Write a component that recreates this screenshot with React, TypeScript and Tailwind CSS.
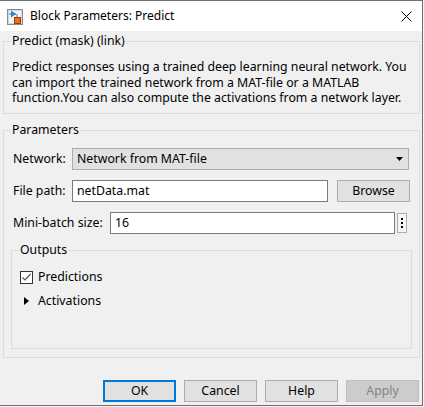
import { useState } from 'react';

const font = { fontFamily: '"Noto Sans", "Liberation Sans", sans-serif' };

function BlockIcon() {
  return (
    <svg width="16" height="16" viewBox="0 0 16 16">
      <rect x="0.5" y="0.5" width="15" height="15" fill="#f4f4f4" stroke="#8a8a8a" />
      <rect x="1.5" y="1.5" width="13" height="13" fill="none" stroke="#d8d8d8" />
      <line x1="2" y1="5" x2="9" y2="5" stroke="#1f6fc4" strokeWidth="1" />
      <polygon points="4,1.5 9,5 4,8.5" fill="#2a86db" />
      <line x1="10" y1="5" x2="10" y2="9" stroke="#6a6a6a" />
      <rect x="7.5" y="8.5" width="6" height="6" fill="#e8731e" stroke="#a33a0a" />
    </svg>
  );
}

function Group({ title, className, children }: { title: string; className: string; children?: React.ReactNode }) {
  return (
    <div className={`relative border border-[#dcdcdc] ${className}`}>
      <span className="absolute -top-[9px] left-[7px] bg-[#f0f0f0] px-[1px] text-[12.3px] leading-[16px] text-black">
        {title}
      </span>
      {children}
    </div>
  );
}

export default function App() {
  const [predictions, setPredictions] = useState(true);

  return (
    <div className="w-[424px] h-[407px] bg-[#f3f3f3] overflow-hidden" style={font}>
      <div className="w-[423px] h-[406px] border-t border-r border-b border-[#707070] flex flex-col bg-[#f0f0f0] text-[12.3px] leading-[16px] text-black">
        <div className="h-[30px] bg-white flex items-center shrink-0">
          <div className="ml-[7px] mt-[1px]">
            <BlockIcon />
          </div>
          <span className="ml-[7px] text-[12px]">Block Parameters: Predict</span>
          <svg className="ml-auto mr-[10px]" width="11" height="11" viewBox="0 0 11 11">
            <path d="M0.5 0.5 L10.5 10.5 M10.5 0.5 L0.5 10.5" stroke="#000" strokeWidth="1" />
          </svg>
        </div>

        <Group title="Predict (mask) (link)" className="ml-[3px] mt-[10px] w-[417px] h-[73px] pt-[17px] pl-[8px]">
          <p className="whitespace-nowrap leading-[15.5px]">
            Predict responses using a trained deep learning neural network. You
            <br />
            can import the trained network from a MAT-file or a MATLAB
            <br />
            function.You can also compute the activations from a network layer.
          </p>
        </Group>

        <Group title="Parameters" className="ml-[3px] mt-[16px] w-[417px] h-[228px] pt-[17px]">
          <div className="flex items-center h-[22px] pl-[9px]">
            <span className="w-[59px]">Network:</span>
            <div className="w-[337px] h-[22px] border border-[#adadad] bg-[#e1e1e1] flex items-center pl-[4px]">
              <span>Network from MAT-file</span>
              <svg className="ml-auto mr-[5px]" width="7" height="4" viewBox="0 0 7 4">
                <polygon points="0,0 7,0 3.5,4" fill="#000" />
              </svg>
            </div>
          </div>

          <div className="flex items-center h-[22px] pl-[9px] mt-[10px]">
            <span className="w-[59px]">File path:</span>
            <div className="w-[256px] h-[22px] border border-[#7a7a7a] bg-white flex items-center pl-[4px]">
              netData.mat
            </div>
            <button className="ml-[9px] w-[73px] h-[22px] border border-[#adadad] bg-[#e1e1e1] text-[12.3px]">
              Browse
            </button>
          </div>

          <div className="flex items-center h-[22px] pl-[9px] mt-[10px]">
            <span className="w-[97px]">Mini-batch size:</span>
            <div className="w-[285px] h-[22px] border border-[#7a7a7a] bg-white flex items-center pl-[4px]">
              16
            </div>
            <div className="ml-[2px] w-[10px] h-[20px] border border-[#adadad] bg-[#f5f5f5] flex flex-col items-center justify-center gap-[2px]">
              <span className="w-[2px] h-[2px] bg-black" />
              <span className="w-[2px] h-[2px] bg-black" />
              <span className="w-[2px] h-[2px] bg-black" />
            </div>
          </div>

          <Group title="Outputs" className="ml-[7px] mt-[16px] w-[401px] h-[99px] pt-[18px] pl-[8px]">
            <label className="flex items-center h-[16px] cursor-default">
              <span
                className="w-[13px] h-[13px] border border-[#333] bg-white flex items-center justify-center"
                onClick={() => setPredictions(!predictions)}
              >
                {predictions && (
                  <svg width="11" height="11" viewBox="0 0 11 11">
                    <path d="M1.5 5.5 L4 8 L9.5 2" stroke="#555" strokeWidth="1.2" fill="none" />
                  </svg>
                )}
              </span>
              <span className="ml-[5px]">Predictions</span>
            </label>
            <div className="flex items-center h-[16px] mt-[8px]">
              <svg className="ml-[4px]" width="5" height="8" viewBox="0 0 5 8">
                <polygon points="0,0 5,4 0,8" fill="#000" />
              </svg>
              <span className="ml-[9px]">Activations</span>
            </div>
          </Group>
        </Group>

        <div className="flex mt-[22px] pl-[103px] gap-[8px]">
          <button className="w-[73px] h-[22px] border-2 border-[#0078d7] bg-[#e1e1e1] text-[12.3px]">OK</button>
          <button className="w-[73px] h-[22px] border border-[#adadad] bg-[#e1e1e1] text-[12.3px]">Cancel</button>
          <button className="w-[73px] h-[22px] border border-[#adadad] bg-[#e1e1e1] text-[12.3px]">Help</button>
          <button className="w-[73px] h-[22px] border border-[#bfbfbf] bg-[#cccccc] text-[12.3px] text-[#838383]">Apply</button>
        </div>
      </div>
    </div>
  );
}
